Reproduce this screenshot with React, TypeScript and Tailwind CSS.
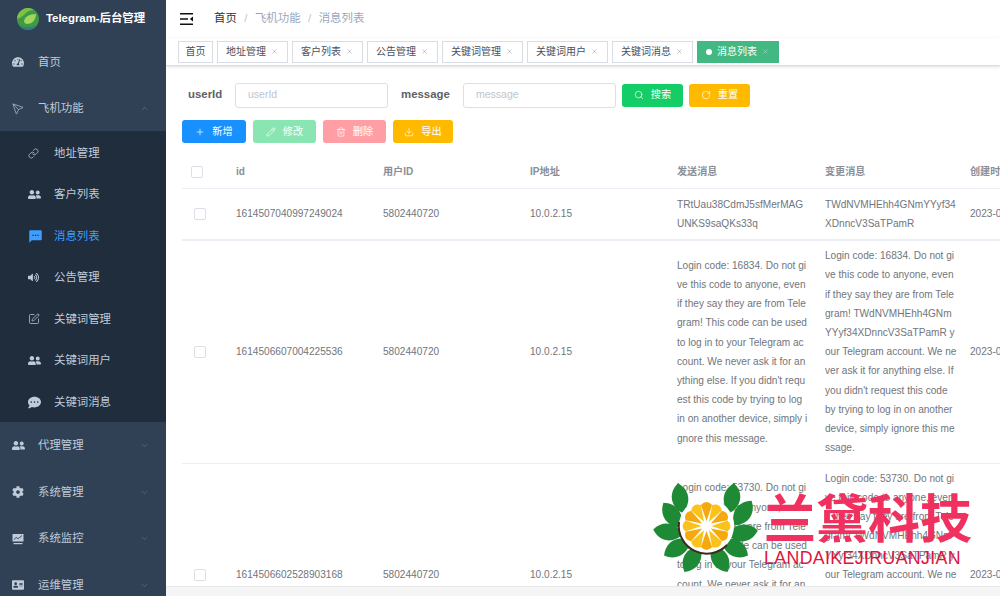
import React from "react";
import { ChevronDown, ChevronUp, Search, RotateCw, Plus, Pencil, Trash2, Download, Send, Link as LinkIcon, SquarePen, X } from "lucide-react";
import { FaTachometerAlt, FaUserFriends, FaVolumeUp, FaCommentDots, FaCog, FaAddressCard } from "react-icons/fa";
import { MdSms } from "react-icons/md";

const font = "font-['Liberation_Sans','Noto_Sans_CJK_SC',sans-serif]";

function MonitorIcon() {
  return (
    <svg width="12" height="12" viewBox="0 0 12 12">
      <path d="M.5 1h11v7.5H.5z" fill="currentColor" />
      <path d="M2 6.5l2.2-2 2 1.2L10 2.6" stroke="#304156" strokeWidth="0.9" fill="none" />
      <path d="M1.5 10h9v1.2h-9z" fill="currentColor" />
    </svg>
  );
}

function MenuTop({ icon, label, open, chevron = true }: { icon: React.ReactNode; label: string; open?: boolean; chevron?: boolean }) {
  return (
    <div className="flex h-[46.5px] shrink-0 items-center pl-[12px] pr-[17px] pt-[2px] text-[11.4px] text-[#bfcbd9]">
      <span className="flex w-[26px] shrink-0 items-center">{icon}</span>
      <span className="flex-1 whitespace-nowrap">{label}</span>
      {chevron && (open ? <ChevronUp size={9} strokeWidth={1.2} className="text-[#7f8c9c]" /> : <ChevronDown size={9} strokeWidth={1.2} className="text-[#7f8c9c]" />)}
    </div>
  );
}

function SubItem({ icon, label, active }: { icon: React.ReactNode; label: string; active?: boolean }) {
  return (
    <div className={`flex h-[41.5px] shrink-0 items-center pl-[28px] pt-[3px] text-[11.4px] ${active ? "text-[#409eff]" : "text-[#bfcbd9]"}`}>
      <span className="flex w-[26px] shrink-0 items-center">{icon}</span>
      <span className="whitespace-nowrap">{label}</span>
    </div>
  );
}

function Sidebar() {
  return (
    <aside className="flex h-full w-[166px] shrink-0 flex-col overflow-hidden bg-[#304156]">
      <div className="flex h-[38px] shrink-0 items-center pl-[16px]">
        <svg width="24" height="24" viewBox="0 0 24 24" className="shrink-0">
          <circle cx="12" cy="12" r="11" fill="#3f9a45" />
          <path d="M1 12a11 11 0 0 1 17-9c-6 0-8 3-10 5S3 11 1 12z" fill="#7fc241" />
          <path d="M8 15c0-5 5-8 12-8 0 6-4 10-9 10-1 0-2-1-3-2z" fill="#a4d65e" />
          <path d="M3 18c5 3 12 3 17 0-3 4-6 5-8 5s-6-1-9-5z" fill="#2e7d8c" />
        </svg>
        <span className="ml-[6px] whitespace-nowrap text-[11.4px] font-bold text-white">Telegram-后台管理</span>
      </div>
      <MenuTop icon={<FaTachometerAlt size={12} />} label="首页" chevron={false} />
      <MenuTop icon={<Send size={12} strokeWidth={1.3} className="-scale-x-100" />} label="飞机功能" open />
      <div className="shrink-0 bg-[#1f2d3d]">
        <SubItem icon={<LinkIcon size={11} strokeWidth={1.6} />} label="地址管理" />
        <SubItem icon={<FaUserFriends size={13} />} label="客户列表" />
        <SubItem icon={<MdSms size={15} />} label="消息列表" active />
        <SubItem icon={<FaVolumeUp size={11} />} label="公告管理" />
        <SubItem icon={<SquarePen size={12} strokeWidth={1.5} />} label="关键词管理" />
        <SubItem icon={<FaUserFriends size={13} />} label="关键词用户" />
        <SubItem icon={<FaCommentDots size={13} />} label="关键词消息" />
      </div>
      <MenuTop icon={<FaUserFriends size={13} />} label="代理管理" />
      <MenuTop icon={<FaCog size={12} />} label="系统管理" />
      <MenuTop icon={<MonitorIcon />} label="系统监控" />
      <MenuTop icon={<FaAddressCard size={12} />} label="运维管理" />
    </aside>
  );
}

function Navbar() {
  return (
    <div className="flex h-[38px] shrink-0 items-center pl-[14px] text-[11.4px]">
      <svg width="13" height="12" viewBox="0 0 13 12" className="mr-[21px] shrink-0">
        <path d="M0 .8h13M0 11.2h13M0 6h8" stroke="#111" strokeWidth="1.5" fill="none" />
        <path d="M13 3.5v5L9.8 6z" fill="#111" />
      </svg>
      <span className="text-[#303133]">首页</span>
      <span className="mx-[7.5px] text-[#c0c4cc]">/</span>
      <span className="text-[#97a8be]">飞机功能</span>
      <span className="mx-[7.5px] text-[#c0c4cc]">/</span>
      <span className="text-[#97a8be]">消息列表</span>
    </div>
  );
}

function Tag({ label, active, close = true, w }: { label: string; active?: boolean; close?: boolean; w: string }) {
  return (
    <div className={`flex h-[21.5px] shrink-0 items-center justify-center whitespace-nowrap border text-[10px] ${w} ${active ? "border-[#42b983] bg-[#42b983] text-white" : "border-[#d8dce5] bg-white text-[#495060]"}`}>
      {active && <span className="mr-[5px] h-[6px] w-[6px] rounded-full bg-white" />}
      <span>{label}</span>
      {close && <X size={7} strokeWidth={1.5} className="ml-[5px] mr-[1px] opacity-70" />}
    </div>
  );
}

function TagsBar() {
  return (
    <div className="flex h-[28px] shrink-0 gap-[4px] border-b border-[#d8dce5] pl-[12px] pt-[3px] shadow-[0_1px_3px_rgba(0,0,0,0.12)]">
      <Tag label="首页" close={false} w="w-[35px]" />
      <Tag label="地址管理" w="w-[71px]" />
      <Tag label="客户列表" w="w-[71px]" />
      <Tag label="公告管理" w="w-[71px]" />
      <Tag label="关键词管理" w="w-[81px]" />
      <Tag label="关键词用户" w="w-[81px]" />
      <Tag label="关键词消息" w="w-[81px]" />
      <Tag label="消息列表" active w="w-[82px]" />
    </div>
  );
}

function Input({ ph }: { ph: string }) {
  return (
    <div className="flex h-[25px] w-[153px] shrink-0 items-center rounded-[3px] border border-[#dcdfe6] bg-white pl-[12px] text-[10.5px] text-[#c0c4cc]">
      {ph}
    </div>
  );
}

function Btn({ icon, label, cls }: { icon: React.ReactNode; label: string; cls: string }) {
  return (
    <div className={`flex shrink-0 items-center justify-center gap-[7px] rounded-[3px] text-[10.2px] text-white ${cls}`}>
      {icon}
      <span>{label}</span>
    </div>
  );
}

const Check = () => <span className="block h-[12px] w-[12px] rounded-[2px] border border-[#dcdfe6] bg-white" />;

const lines = (a: string[]) =>
  a.map((l, i) => (
    <span key={i} className="block whitespace-nowrap">
      {l}
    </span>
  ));

const sendBody = (code: string) => [
  `Login code: ${code}. Do not gi`,
  "ve this code to anyone, even",
  "if they say they are from Tele",
  "gram! This code can be used",
  "to log in to your Telegram ac",
  "count. We never ask it for an",
  "ything else. If you didn't requ",
  "est this code by trying to log",
  "in on another device, simply i",
  "gnore this message.",
];

const changeBody = (code: string) => [
  `Login code: ${code}. Do not gi`,
  "ve this code to anyone, even",
  "if they say they are from Tele",
  "gram! TWdNVMHEhh4GNm",
  "YYyf34XDnncV3SaTPamR y",
  "our Telegram account. We ne",
  "ver ask it for anything else. If",
  "you didn't request this code",
  "by trying to log in on another",
  "device, simply ignore this me",
  "ssage.",
];

const rows = [
  {
    id: "1614507040997249024",
    h: "h-[51.5px]",
    border: "border-b-2",
    send: ["TRtUau38CdmJ5sfMerMAG", "UNKS9saQKs33q"],
    change: ["TWdNVMHEhh4GNmYYyf34", "XDnncV3SaTPamR"],
  },
  { id: "1614506607004225536", h: "h-[223px]", border: "border-b", send: sendBody("16834"), change: changeBody("16834") },
  { id: "1614506602528903168", h: "h-[223px]", border: "border-b", send: sendBody("53730"), change: changeBody("53730") },
];

function DataTable() {
  const th = "pl-[9px] text-left text-[10.1px] font-bold text-[#8a8f99]";
  const td = "pl-[9px] align-middle text-[10.1px] leading-[19.2px] text-[#71757c]";
  return (
    <div className="mt-[12px] min-h-0 flex-1 overflow-hidden">
      <table className="w-[960px] table-fixed border-collapse">
        <colgroup>
          <col className="w-[45px]" />
          <col className="w-[147px]" />
          <col className="w-[147px]" />
          <col className="w-[147px]" />
          <col className="w-[148px]" />
          <col className="w-[145px]" />
          <col className="w-[181px]" />
        </colgroup>
        <thead>
          <tr className="h-[33.5px] border-b border-[#ebeef5]">
            <th className="pl-[9px] text-left"><Check /></th>
            <th className={th}>id</th>
            <th className={th}>用户ID</th>
            <th className={th}>IP地址</th>
            <th className={th}>发送消息</th>
            <th className={th}>变更消息</th>
            <th className={`${th} whitespace-nowrap`}>创建时间</th>
          </tr>
        </thead>
        <tbody>
          {rows.map((r) => (
            <tr key={r.id} className={`${r.h} ${r.border} border-[#ebeef5]`}>
              <td className="pl-[12px] align-middle"><Check /></td>
              <td className={td}>{r.id}</td>
              <td className={td}>5802440720</td>
              <td className={td}>10.0.2.15</td>
              <td className={td}>{lines(r.send)}</td>
              <td className={td}>{lines(r.change)}</td>
              <td className={`${td} whitespace-nowrap`}>2023-01-15 12:30:24</td>
            </tr>
          ))}
        </tbody>
      </table>
    </div>
  );
}

const leaves: [number, number, number][] = [
  [40, 28, -8],
  [92, 28, 8],
  [32, 45, -35],
  [103, 43, 35],
  [28, 62, -80],
  [103, 63, 80],
  [37, 78, -120],
  [95, 78, 120],
  [52, 89, -150],
  [80, 89, 150],
];

function Watermark() {
  const petals = Array.from({ length: 12 }, (_, i) => i * 30);
  return (
    <div className="pointer-events-none absolute left-[640px] top-[470px] h-[110px] w-[340px]">
      <svg width="120" height="110" viewBox="0 0 120 110" className="absolute left-0 top-0">
        {leaves.map(([x, y, r], i) => (
          <path key={i} d="M0-15C11-7 11 7 0 15-11 7-11-7 0-15z" fill="#1f8a36" transform={`translate(${x} ${y}) rotate(${r})`} />
        ))}
        <circle cx="66.5" cy="56" r="27.5" fill="#ffffff" />
        {petals.map((a) => (
          <path key={a} d="M0-5L5.6-21Q0-27-5.6-21z" fill={a % 60 === 0 ? "#f5a90f" : "#fbc21b"} transform={`translate(66.5 56) rotate(${a})`} />
        ))}
        <path d="M39 52a28 28 0 0 0 48 23" fill="none" stroke="#3d2b1a" strokeWidth="2" />
      </svg>
      <span className="absolute left-[124px] top-[15px] whitespace-nowrap text-[52px] font-bold leading-[70px] text-[#f0315f]">兰黛科技</span>
      <span className="absolute left-[124px] top-[78px] whitespace-nowrap text-[17.8px] leading-[20px] tracking-[0.35px] text-[#e0143c]">LANDAIKEJIRUANJIAN</span>
    </div>
  );
}

export default function App() {
  return (
    <div className={`relative flex h-[596px] w-[1000px] overflow-hidden bg-white ${font}`}>
      <Sidebar />
      <main className="flex min-w-0 flex-1 flex-col overflow-hidden">
        <Navbar />
        <TagsBar />
        <section className="flex min-h-0 flex-1 flex-col overflow-hidden pl-[16px] pt-[16.5px]">
          <div className="flex h-[25px] items-center pl-[6px]">
            <span className="w-[47px] shrink-0 text-[11.4px] font-bold text-[#606266]">userId</span>
            <Input ph="userId" />
            <span className="ml-[13px] w-[62px] shrink-0 text-[11.4px] font-bold text-[#606266]">message</span>
            <Input ph="message" />
            <Btn icon={<Search size={10} strokeWidth={1.6} />} label="搜索" cls="ml-[6px] h-[23px] w-[61px] bg-[#13ce66]" />
            <Btn icon={<RotateCw size={10} strokeWidth={1.6} />} label="重置" cls="ml-[6px] h-[23px] w-[61px] bg-[#ffba00]" />
          </div>
          <div className="mt-[12.5px] flex h-[23px] gap-[7px]">
            <Btn icon={<Plus size={10} strokeWidth={1.6} />} label="新增" cls="w-[64px] bg-[#1890ff]" />
            <Btn icon={<Pencil size={10} strokeWidth={1.6} />} label="修改" cls="w-[63px] bg-[#89e6b3]" />
            <Btn icon={<Trash2 size={10} strokeWidth={1.6} />} label="删除" cls="w-[63px] bg-[#ff9fa5]" />
            <Btn icon={<Download size={10} strokeWidth={1.6} />} label="导出" cls="w-[60px] bg-[#ffba00]" />
          </div>
          <DataTable />
        </section>
        <div className="h-[10px] shrink-0 border-t border-[#e8e8e8] bg-[#f5f5f5]" />
      </main>
      <Watermark />
    </div>
  );
}
